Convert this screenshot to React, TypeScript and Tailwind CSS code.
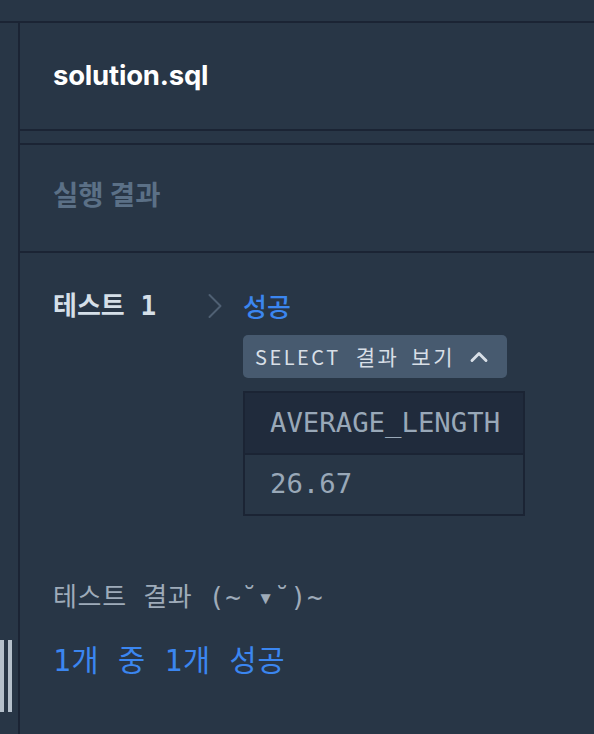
import { ChevronRight, ChevronUp } from "lucide-react";

const mono = "font-['DejaVu_Sans_Mono','Noto_Sans_CJK_KR',monospace]";
const sans = "font-['Noto_Sans_CJK_KR','Noto_Sans',sans-serif]";

export default function App() {
  return (
    <div className="flex h-[734px] w-[594px] flex-col overflow-hidden bg-[#283646]">
      {/* top strip */}
      <div className="h-[23px] shrink-0 border-b-2 border-[#1b2434]" />

      <div className="flex flex-1">
        {/* left gutter with resize handle */}
        <div className="flex w-[20px] shrink-0 flex-col justify-end border-r-2 border-[#1b2434] pb-[22px]">
          <div className="flex h-[72px] gap-[4px]">
            <div className="w-[4px] bg-[#b5c0cb]" />
            <div className="w-[4px] bg-[#b5c0cb]" />
          </div>
        </div>

        <div className="flex flex-1 flex-col">
          <div className="flex h-[108px] items-center border-b-2 border-[#1b2434] pl-[33px]">
            <span className="font-['Inter',sans-serif] text-[27.5px] font-bold tracking-[-0.2px] text-white">
              solution.sql
            </span>
          </div>
          <div className="h-[14px] border-b-2 border-[#1b2434]" />
          <div className="flex h-[108px] items-center border-b-2 border-[#1b2434] pb-[8px] pl-[33px]">
            <span className={`${sans} text-[27.5px] font-bold text-[#5b7086]`}>실행 결과</span>
          </div>

          <div className="pl-[33px] pt-[36px]">
            <div className="flex">
              <div className={`${mono} w-[155px] text-[26px] font-semibold leading-[34px] text-[#d5dfe8]`}>
                테스트 1
              </div>
              <div className="flex h-[34px] w-[35px] items-center">
                <ChevronRight className="-ml-[15px] h-[44px] w-[44px] text-[#4f6073]" strokeWidth={1.1} />
              </div>
              <div className="flex flex-col">
                <span className={`${sans} text-[26px] font-medium leading-[34px] text-[#3b86f0]`}>성공</span>
                <button
                  className={`${sans} mt-[12px] flex h-[43px] w-[264px] items-center rounded-[5px] bg-[#475a6f] pl-[12px] text-[20px] tracking-[2.5px] text-[#d8dfe7]`}
                >
                  <span>SELECT</span>
                  <span className="ml-[15px] text-[21px]">결과</span>
                  <span className="ml-[12px] text-[21px]">보기</span>
                  <ChevronUp className="ml-[10px] h-[28px] w-[28px] text-[#d8dfe7]" strokeWidth={2.5} />
                </button>
                <table className={`${mono} mt-[13px] w-[282px] border-2 border-[#1b2434] text-left text-[27.3px] text-[#99a8b8]`}>
                  <thead>
                    <tr className="bg-[#202b3c]">
                      <th className="h-[62px] border-b-2 border-[#1b2434] pl-[25px] font-normal">AVERAGE_LENGTH</th>
                    </tr>
                  </thead>
                  <tbody>
                    <tr>
                      <td className="h-[61px] pl-[25px]">26.67</td>
                    </tr>
                  </tbody>
                </table>
              </div>
            </div>

            <div className={`${mono} mt-[64px] text-[26px] tracking-[0.7px] leading-[34px] text-[#9eabb9]`}>
              테스트 결과 (~˘▾˘)~
            </div>
            <div className={`${mono} mt-[28px] text-[29.5px] tracking-[0.8px] leading-[38px] text-[#3b86f0]`}>
              1개 중 1개 성공
            </div>
          </div>
        </div>
      </div>
    </div>
  );
}
